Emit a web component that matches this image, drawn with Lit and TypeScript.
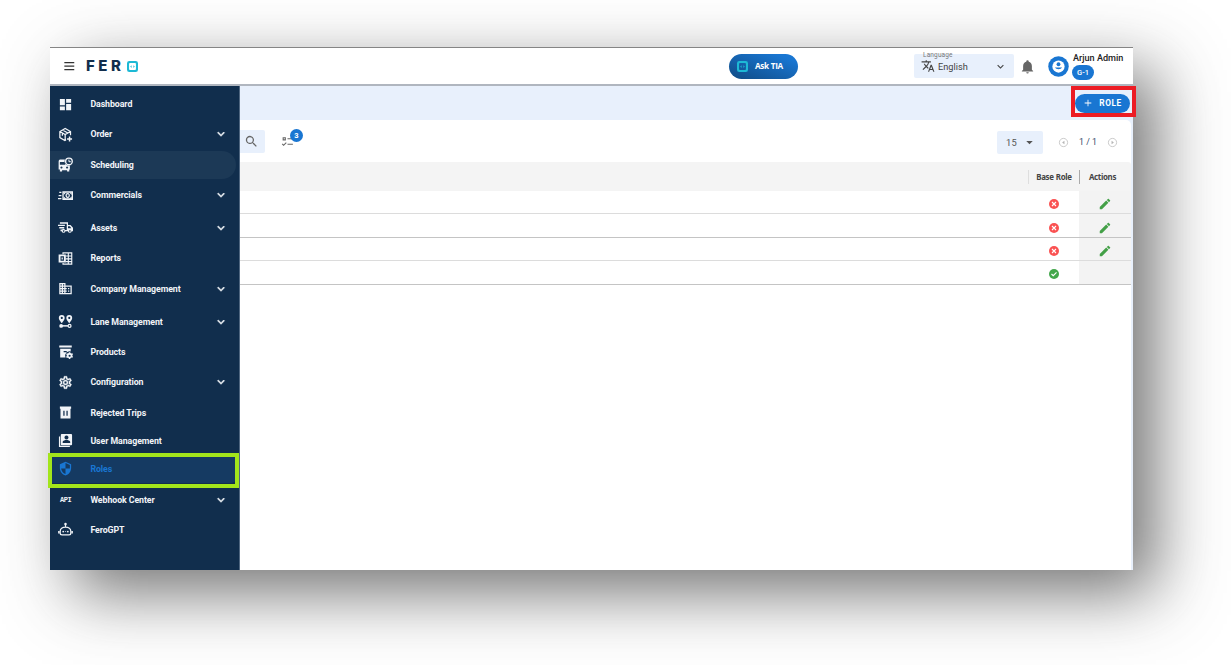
import { LitElement, html, css, svg } from "lit";
import { customElement } from "lit/decorators.js";
import { classMap } from "lit/directives/class-map.js";

const icons: Record<string, unknown> = {
  dashboard: svg`<path d="M3 13h8V3H3v10zm0 8h8v-6H3v6zm10 0h8V11h-8v10zm0-18v6h8V3h-8z"/>`,
  order: svg`<g fill="none" stroke="currentColor" stroke-width="2"><path d="M13 20.5 11 21.6 3 17V7.2L11.5 2.4 20 7.2V13M3 7.2l8.500 4.800L20 7.200M11.500 12v9M7.200 4.800l8.500 4.900M7 10v4"/><path d="M18.500 15v8M14.500 19h8" stroke-width="2.400"/></g>`,
  scheduling: svg`<path fill-rule="evenodd" d="M3 4h8a7 7 0 0 0 8 9.500V20h-1v3h-3.500v-2h-8v2H3v-3H1V7a3 3 0 0 1 2-3zm0 4v4.500h8.500V8zM5.500 15a1.700 1.700 0 1 0 .1 0zm9 0a1.700 1.700 0 1 0 .1 0z"/><circle cx="17.500" cy="7" r="5.300" fill="none" stroke="currentColor" stroke-width="2.200"/><path d="M17.500 4v3.500h3" fill="none" stroke="currentColor" stroke-width="1.600"/>`,
  commercials: svg`<path fill-rule="evenodd" d="M7 5h17v14H7zm2 2.500v9h13v-9z"/><path fill-rule="evenodd" d="M9 7h4L9 11zm13 0v4l-4-4zm0 10h-4l4-4zM9 17v-4l4 4zM15.500 8a3.500 4 0 1 1-.1 0zm0 2a1.500 2 0 1 0 .1 0z"/><path d="M2 6h3.500v2H2zm-1 5h4.500v2H1zm-1 5h5.500v2H0z"/>`,
  assets: svg`<path fill-rule="evenodd" d="M3 3.500h13V8h4l4 4.500V18h-2a3.200 3.200 0 0 1-6.200 0H12a3.200 3.200 0 0 1-6.200 0H4v-3h2.500a3.200 3.200 0 0 1 5 1H14V6H3zm13 6.500v3h5.300L19 10zM9 16.200a1.300 1.300 0 1 0 .1 0zm10 0a1.300 1.300 0 1 0 .1 0z"/><path d="M0 7.500h11v2.200H0zm2 3.700h8v2.200H2z"/>`,
  reports: svg`<path fill-rule="evenodd" d="M1 5.500h11.500v13H1zm3 3v7h5.500v-7zM5.700 10.500h2v3h-2z"/><path fill="none" stroke="currentColor" stroke-width="1.800" d="M8 5V3h14v18H8v-2M12 8h10M12 12.500h10M12 17h10M16.500 3v18"/>`,
  company: svg`<path d="M12 7V3H2v18h20V7H12zM6 19H4v-2h2v2zm0-4H4v-2h2v2zm0-4H4V9h2v2zm0-4H4V5h2v2zm4 12H8v-2h2v2zm0-4H8v-2h2v2zm0-4H8V9h2v2zm0-4H8V5h2v2zm10 12h-8v-2h2v-2h-2v-2h2v-2h-2V9h8v10zm-2-8h-2v2h2v-2zm0 4h-2v2h2v-2z"/>`,
  lane: svg`<path fill-rule="evenodd" d="M6 1.500a4.700 4.700 0 0 1 4.700 4.700C10.700 9.500 6 14.500 6 14.500S1.300 9.500 1.300 6.200A4.700 4.700 0 0 1 6 1.500zM6 4.500a1.700 1.700 0 1 0 .1 0zM18 1.500a4.700 4.700 0 0 1 4.700 4.700c0 3.300-4.700 8.300-4.700 8.300s-4.700-5-4.700-8.300A4.700 4.700 0 0 1 18 1.500zM18 4.500a1.700 1.700 0 1 0 .1 0z"/><circle cx="5" cy="19" r="3"/><path d="M6 17.800h10v2.400H6z"/><circle cx="18.500" cy="19" r="2.300" fill="none" stroke="currentColor" stroke-width="2"/>`,
  products: svg`<path fill-rule="evenodd" d="M2 2.500h20v3.200H2zm1.500 5.200h16.800v4.300A7 7 0 0 0 12 21.500H3.500zM9 11v2h5v-2z"/><path fill-rule="evenodd" d="m17.500 13 2 0 .5 1.500 1.500.7 1.500-.5 1 1.700-1 1.300v1.500l1 1.200-1 1.700-1.600-.4-1.400.8-.5 1.500h-2l-.6-1.500-1.400-.7-1.500.4-1-1.700 1-1.300v-1.500l-1-1.200 1-1.800 1.600.5 1.400-.8zm1 4a1.700 1.700 0 1 0 .1 0z"/>`,
  settings: svg`<path stroke="currentColor" stroke-width=".5" d="M12 8a4 4 0 0 1 4 4 4 4 0 0 1-4 4 4 4 0 0 1-4-4 4 4 0 0 1 4-4m0 2a2 2 0 0 0-2 2 2 2 0 0 0 2 2 2 2 0 0 0 2-2 2 2 0 0 0-2-2m-2 12c-.25 0-.46-.18-.5-.42l-.37-2.650c-.63-.25-1.170-.59-1.690-.99l-2.490 1.010c-.22.08-.49 0-.61-.22l-2-3.460c-.13-.22-.07-.49.12-.64l2.110-1.660L4.500 12l.07-1-2.110-1.630c-.19-.15-.25-.42-.12-.64l2-3.460c.12-.22.39-.31.61-.22l2.490 1c.52-.39 1.060-.73 1.690-.98l.37-2.650c.04-.24.25-.42.5-.42h4c.25 0 .46.18.5.42l.37 2.650c.63.25 1.170.59 1.690.98l2.490-1c.22-.09.49 0 .61.22l2 3.460c.13.22.07.49-.12.64L19.430 11l.07 1-.07 1 2.110 1.630c.19.15.25.42.12.64l-2 3.460c-.12.22-.39.31-.61.22l-2.490-1c-.52.39-1.060.73-1.690.98l-.37 2.650c-.04.24-.25.42-.5.42h-4m1.250-18-.37 2.610c-1.200.25-2.260.89-3.030 1.780L5.440 7.350l-.75 1.300L6.800 10.200a5.550 5.550 0 0 0 0 3.600l-2.120 1.560.75 1.300 2.430-1.040c.77.88 1.820 1.520 3.010 1.760l.37 2.620h1.520l.37-2.610c1.190-.25 2.240-.89 3.010-1.770l2.430 1.040.75-1.300-2.120-1.550c.4-1.170.4-2.440 0-3.610l2.110-1.550-.75-1.300-2.410 1.040a5.420 5.420 0 0 0-3.030-1.770L12.750 4h-1.500z"/>`,
  rejected: svg`<path fill-rule="evenodd" d="M3 2.500h18V6H3zM4 6h16v15.500H4zM8.500 9v8h2V9zm5 0v8h2V9z"/>`,
  user: svg`<path fill-rule="evenodd" d="M6 1.500h15a1.500 1.500 0 0 1 1.500 1.500v15a1.500 1.500 0 0 1-1.500 1.500H6A1.500 1.500 0 0 1 4.500 18V3A1.500 1.500 0 0 1 6 1.500zM13.500 4a3.200 3.200 0 1 0 .1 0zM7.500 14v2h12v-2c0-2-4-3-6-3s-6 1-6 3z" /><path d="M1.500 5.500v17H19v-2H3.500v-15z"/>`,
  shield: svg`<path transform="matrix(-1 0 0 1 24 0)" d="M12 1L3 5v6c0 5.550 3.840 10.740 9 12 5.160-1.260 9-6.450 9-12V5l-9-4zm0 10.990h7c-.53 4.120-3.280 7.790-7 8.940V12H5V6.300l7-3.110v8.800z"/>`,
  robot: svg`<path fill="none" stroke="currentColor" stroke-width="2" stroke-linejoin="round" d="M12 3v5M6.500 20.500h11a3 3 0 0 0 3-3V15c0-4-3.500-7-8.500-7s-8.500 3-8.500 7v2.500a3 3 0 0 0 3 3zM1.200 14.500v4M22.800 14.500v4"/><circle cx="12" cy="3" r="2"/><circle cx="8.300" cy="15.200" r="1.400"/><circle cx="15.700" cy="15.200" r="1.400"/><path d="M11 14.700h2v1h-2z"/>`,
  chevron: svg`<path d="M7.410 8.580 12 13.170l4.590-4.590L18 10l-6 6-6-6z"/>`,
  menu: svg`<path d="M4 5h17v2.200H4zm0 6h17v2.200H4zm0 6h17v2.200H4z"/>`,
  mark: svg`<path fill-rule="evenodd" d="M5 0h14a5 5 0 0 1 5 5v14a5 5 0 0 1-5 5H5a5 5 0 0 1-5-5V5a5 5 0 0 1 5-5zm1.500 4.500a2 2 0 0 0-2 2v11a2 2 0 0 0 2 2h11a2 2 0 0 0 2-2v-11a2 2 0 0 0-2-2z"/><path d="m6.500 12 4-3v6zm11 0-4-3v6z" opacity=".75"/>`,
  translate: svg`<path d="m12.870 15.070-2.540-2.510.03-.03A17.500 17.500 0 0 0 14.070 6H17V4h-7V2H8v2H1v2h11.170C11.500 7.920 10.440 9.750 9 11.350 8.070 10.320 7.300 9.190 6.690 8h-2c.73 1.630 1.730 3.170 2.980 4.560l-5.090 5.020L4 19l5-5 3.110 3.110.76-2.040M18.500 10h-2L12 22h2l1.120-3h4.750L21 22h2l-4.500-12m-2.620 7 1.620-4.330L19.120 17h-3.240z"/>`,
  bell: svg`<path d="M21 19v1H3v-1l2-2v-6c0-3.100 2.030-5.830 5-6.710V4a2 2 0 0 1 4 0v.29c2.970.88 5 3.610 5 6.710v6l2 2m-7 2a2 2 0 0 1-4 0"/>`,
  account: svg`<circle cx="12" cy="12" r="11.700" fill="#1976d2"/><circle cx="12" cy="12" r="7" fill="#fff"/><circle cx="12" cy="9.400" r="2.200" fill="#1976d2"/><path d="M7.800 13.200h8.400a4.700 3.600 0 0 1-8.400 0z" fill="#1976d2"/>`,
  search: svg`<path d="M15.500 14h-.79l-.28-.27A6.500 6.500 0 1 0 13.730 14.430l.27.28v.79l5 4.990L20.490 19l-4.990-5zm-6 0a4.500 4.500 0 1 1 0-9 4.500 4.500 0 0 1 0 9z"/>`,
  checklist: svg`<path fill-rule="evenodd" d="M3 4h6v6H3zm2 2v2h2V6zM12 6h10v2H12zm0 10h10v2H12zM4.800 20.500 1.500 17l1.400-1.400 2 2 4.200-4.200 1.400 1.400z"/>`,
  caret: svg`<path d="m6 9 6 6 6-6z"/>`,
  prev: svg`<circle cx="12" cy="12" r="9" fill="none" stroke="currentColor" stroke-width="1.500"/><path d="m14 8-5 4 5 4z"/>`,
  next: svg`<circle cx="12" cy="12" r="9" fill="none" stroke="currentColor" stroke-width="1.500"/><path d="m10 8 5 4-5 4z"/>`,
  no: svg`<circle cx="12" cy="12" r="10"/><path d="m8 8 8 8M16 8l-8 8" stroke="#fff" stroke-width="2.200"/>`,
  yes: svg`<circle cx="12" cy="12" r="10"/><path d="m7 12 3.500 3.500L17 8.700" fill="none" stroke="#fff" stroke-width="2.200"/>`,
  pencil: svg`<path d="M20.710 7.040c.39-.39.39-1.040 0-1.410l-2.340-2.340c-.37-.39-1.020-.39-1.410 0l-1.840 1.830 3.750 3.750M3 17.250V21h3.750L17.810 9.930l-3.750-3.750L3 17.250z"/>`,
  plus: svg`<path d="M11 4h2v7h7v2h-7v7h-2v-7H4v-2h7z"/>`,
};

const icon = (name: string, cls = "") =>
  html`<svg class="icon ${cls}" viewBox="0 0 24 24">${icons[name]}</svg>`;

interface Item { label: string; icon: string; height: number; more?: boolean; state?: string }

const items: Item[] = [
  { label: "Dashboard", icon: "dashboard", height: 30 },
  { label: "Order", icon: "order", height: 30, more: true },
  { label: "Scheduling", icon: "scheduling", height: 31, state: "hover" },
  { label: "Commercials", icon: "commercials", height: 30, more: true },
  { label: "Assets", icon: "assets", height: 35, more: true },
  { label: "Reports", icon: "reports", height: 26 },
  { label: "Company Management", icon: "company", height: 35, more: true },
  { label: "Lane Management", icon: "lane", height: 31, more: true },
  { label: "Products", icon: "products", height: 29 },
  { label: "Configuration", icon: "settings", height: 32, more: true },
  { label: "Rejected Trips", icon: "rejected", height: 29 },
  { label: "User Management", icon: "user", height: 27 },
  { label: "Roles", icon: "shield", height: 29, state: "active" },
  { label: "Webhook Center", icon: "api", height: 33, more: true },
  { label: "FeroGPT", icon: "robot", height: 27 },
];

const rows = [false, false, false, true];

@customElement("app-root")
export class AppRoot extends LitElement {
  static styles = css`
    :host { display: block; box-sizing: border-box; width: 1231px; height: 665px; padding: 47px 0 0 50px; background: #fff; overflow: hidden; font-family: Roboto, sans-serif; color: #333; }
    * { box-sizing: border-box; }
    .icon { display: block; flex: none; width: 15px; height: 15px; fill: currentColor; }
    .window { position: relative; width: 1083px; height: 523px; display: flex; flex-direction: column; background: #fff; box-shadow: 23px 23px 62px rgba(48, 48, 48, .67); }
    header { height: 39px; flex: none; display: flex; align-items: center; border-top: 1px solid #858585; border-bottom: 2px solid #b0b6bf; padding-left: 12px; white-space: nowrap; }
    .menu { width: 14px; height: 14px; color: #333; }
    .brand { display: flex; align-items: center; width: 60px; margin-left: 10px; font: 800 15px/16px Inter, sans-serif; color: #112e4d; }
    .letters { display: block; width: 41px; letter-spacing: 3.500px; }
    .mark { width: 11px; height: 11px; color: #1db9d5; }
    .tia { display: flex; align-items: center; gap: 7px; width: 69px; height: 25px; margin-left: 583px; padding-left: 8px; border-radius: 13px; background: linear-gradient(20deg, #104b84, #1976d2 85%); color: #fff; font: 700 8.200px/12px "Open Sans", sans-serif; letter-spacing: -.3px; }
    .language { position: relative; display: flex; align-items: center; width: 100px; height: 24px; margin-left: 116px; padding: 0 7px; background: #e8f0fc; border-radius: 2px; color: #444; font-size: 9.200px; }
    .legend { position: absolute; left: 9px; top: -3px; font-size: 6.500px; line-height: 8px; color: #777; letter-spacing: .15px; }
    .translate { width: 14px; height: 14px; margin-right: 3px; }
    .open { width: 13px; height: 13px; margin-left: auto; }
    .bell { width: 15px; height: 15px; margin-left: 6px; color: #666; }
    .avatar { width: 21px; height: 21px; margin-left: 13px; }
    .who { display: flex; flex-direction: column; align-items: flex-start; margin-left: 4px; height: 28px; }
    .name { font-size: 9.100px; line-height: 12px; font-weight: 500; color: #222; }
    .tag { width: 22px; height: 15px; margin-top: 1px; margin-left: -1px; border-radius: 8px; background: #1976d2; color: #fff; text-align: center; font: 500 7.500px/15px Roboto, sans-serif; }
    .body { flex: 1; min-height: 0; display: flex; background: #e8f0fc; }
    nav { width: 190px; flex: none; padding-top: 3px; background: #112e4d; border-right: 1px solid #4f6680; }
    .slot { display: flex; align-items: center; }
    .item { display: flex; align-items: center; width: 186px; height: 28px; padding-left: 8px; border-radius: 0 14px 14px 0; color: #f1f4f8; font-size: 8.800px; letter-spacing: -.08px; font-weight: 700; white-space: nowrap; }
    .item.hover { background: #1c3956; }
    .item.active { background: #153a62; color: #1976d2; border-radius: 0 5px 5px 0; }
    .label { margin-left: 17.400px; }
    .api { width: 15px; font: 700 7px/10px "Liberation Mono", monospace; letter-spacing: -.4px; padding-left: 2px; }
    .more { width: 14px; height: 14px; margin-left: auto; margin-right: 8px; stroke: currentColor; stroke-width: 1; }
    main { flex: 1; min-width: 0; display: flex; flex-direction: column; padding-right: 2px; }
    .strip { height: 34px; flex: none; display: flex; align-items: center; justify-content: flex-end; padding: 0 1px 0 0; }
    .add { display: flex; align-items: center; justify-content: center; gap: 6px; width: 55px; height: 19px; border-radius: 10px; background: #1976d2; color: #fff; font-weight: 700; font-size: 8.300px; letter-spacing: .55px; }
    .plus { width: 10px; height: 10px; }
    .card { flex: 1; background: #fff; border-radius: 0 5px 0 0; }
    .tools { height: 42px; display: flex; align-items: center; }
    .find { display: flex; align-items: center; width: 25px; height: 23px; padding-left: 4px; background: #e8f0fc; border-radius: 0 2px 2px 0; color: #666; }
    .search { width: 15px; height: 15px; }
    .filters { position: relative; margin-left: 16px; color: #666; }
    .checklist { width: 13px; height: 13px; }
    .count { position: absolute; left: 9px; top: -6px; width: 13px; height: 13px; border-radius: 50%; background: #1976d2; color: #fff; text-align: center; font: 700 7.500px/13px Roboto, sans-serif; }
    .size { display: flex; align-items: center; justify-content: space-between; width: 46px; height: 23px; margin: 2px 0 0 auto; padding: 0 7px 0 9px; border-radius: 2px; background: #e8f0fc; font-size: 9.300px; letter-spacing: .3px; color: #555; }
    .caret { width: 13px; height: 13px; }
    .pager { display: flex; align-items: center; margin: 2px 13px 0 15px; color: #b5b5b5; }
    .page { width: 27px; margin: 0 1px 0 10px; font-size: 8.800px; color: #35496a; white-space: nowrap; }
    .pager .icon { width: 11px; height: 11px; }
    .thead, .row { display: grid; grid-template-columns: 1fr 51px 52px; }
    .thead { height: 29px; align-items: center; background: #f4f4f4; border-radius: 0 3px 0 0; font: 700 7.900px/14px "Noto Sans", sans-serif; letter-spacing: -.32px; word-spacing: .5px; text-align: center; color: #444; }
    .th { border-left: 1px solid #dedede; white-space: nowrap; }
    .th.last { border-color: #aaa; padding-right: 6px; }
    .row { height: 23.400px; border-bottom: 1px solid #c4c4c4; }
    .row:nth-of-type(even) { border-bottom-color: #dcdcdc; }
    .cell { display: flex; align-items: center; justify-content: center; padding-top: 4px; }
    .cell.act { background: #f3f3f3; color: #43a047; }
    .no { width: 12px; height: 12px; color: #fa5252; }
    .yes { width: 12px; height: 12px; color: #43a74b; }
    .pencil { width: 14px; height: 14px; margin-right: 1px; }
    .row:nth-of-type(3) { border-bottom-color: #dcdcdc; }
    .row:nth-of-type(4) { border-bottom-color: #c4c4c4; }
    .row:nth-of-type(5) { border-bottom-color: #dcdcdc; }
    .row:nth-of-type(6) { border-bottom-color: #c4c4c4; }
    .frame { position: absolute; pointer-events: none; }
    .green { left: -2px; top: 406px; width: 191px; height: 35px; border: 4px solid #a2e51b; }
    .red { left: 1021px; top: 39px; width: 65px; height: 31px; border: 4px solid #ec1c24; }
  `;

  renderItem(item: Item) {
    return html`<div class="slot" style="height:${item.height}px">
      <div class=${classMap({ item: true, hover: item.state === "hover", active: item.state === "active" })}>
        ${item.icon === "api" ? html`<span class="api">API</span>` : icon(item.icon)}
        <span class="label">${item.label}</span>
        ${item.more ? icon("chevron", "more") : ""}
      </div>
    </div>`;
  }

  render() {
    return html`<div class="window">
      <header>
        ${icon("menu", "menu")}
        <div class="brand"><span class="letters">FER</span>${icon("mark", "mark")}</div>
        <div class="tia">${icon("mark", "mark")}<span>Ask TIA</span></div>
        <div class="language"><span class="legend">Language</span>${icon("translate", "translate")}<span>English</span>${icon("chevron", "open")}</div>
        ${icon("bell", "bell")}
        ${icon("account", "avatar")}
        <div class="who"><span class="name">Arjun Admin</span><span class="tag">G-1</span></div>
      </header>
      <div class="body">
        <nav>${items.map((item) => this.renderItem(item))}</nav>
        <main>
          <div class="strip"><div class="add">${icon("plus", "plus")}<span>ROLE</span></div></div>
          <div class="card">
            <div class="tools">
              <div class="find">${icon("search", "search")}</div>
              <div class="filters">${icon("checklist", "checklist")}<span class="count">3</span></div>
              <div class="size"><span>15</span>${icon("caret", "caret")}</div>
              <div class="pager">${icon("prev")}<span class="page">1 / 1</span>${icon("next")}</div>
            </div>
            <div class="thead"><span></span><span class="th">Base Role</span><span class="th last">Actions</span></div>
            ${rows.map((base) => html`<div class="row"><span></span>
              <div class="cell">${base ? icon("yes", "yes") : icon("no", "no")}</div>
              <div class="cell act">${base ? "" : icon("pencil", "pencil")}</div>
            </div>`)}
          </div>
        </main>
      </div>
      <div class="frame green"></div>
      <div class="frame red"></div>
    </div>`;
  }
}
